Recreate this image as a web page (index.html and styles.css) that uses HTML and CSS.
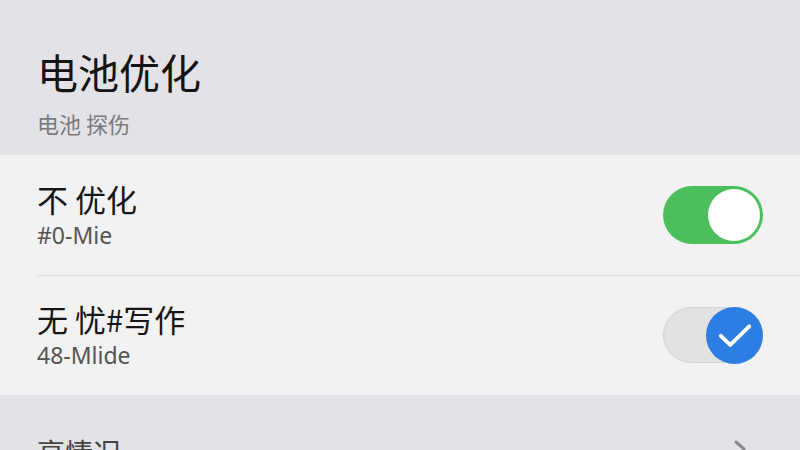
FILE: index.html
```html
<!DOCTYPE html>
<html lang="zh-CN">
<head>
<meta charset="utf-8">
<title>电池优化</title>
<link rel="stylesheet" href="styles.css">
</head>
<body>
  <header class="page-head">
    <h1 class="page-title">电池优化</h1>
    <p class="page-sub">电池 探伤</p>
  </header>

  <section class="card">
    <div class="row">
      <div class="row-text">
        <div class="row-title">不 优化</div>
        <div class="row-sub">#0-Mie</div>
      </div>
      <span class="switch switch-on"><span class="knob"></span></span>
    </div>
    <div class="row">
      <div class="row-text">
        <div class="row-title">无 忧#写作</div>
        <div class="row-sub">48-Mlide</div>
      </div>
      <span class="switch switch-check">
        <span class="knob knob-check">
          <svg viewBox="0 0 24 24" width="38" height="38"><path d="M3 12.5l6 5.8L21 6.5" fill="none" stroke="#fff" stroke-width="2.4" stroke-linecap="round" stroke-linejoin="round"/></svg>
        </span>
      </span>
    </div>
  </section>

  <section class="more">
    <span class="more-title">亮情况</span>
    <svg class="chevron" viewBox="0 0 20 20" width="20" height="20"><path d="M6 4l8 7" fill="none" stroke="#8a8a8e" stroke-width="3" stroke-linecap="round"/></svg>
  </section>
</body>
</html>
```
FILE: styles.css
```css
html, body {
  margin: 0;
  padding: 0;
}
body {
  width: 800px;
  height: 450px;
  overflow: hidden;
  background: #e3e2e7;
  font-family: "Noto Sans CJK SC", "Noto Sans", sans-serif;
  color: #141414;
}

.page-head {
  height: 155px;
  padding: 0 0 0 37px;
  box-sizing: border-box;
  display: flex;
  flex-direction: column;
}
.page-title {
  margin: 43px 0 0;
  font-size: 41px;
  font-weight: 400;
  line-height: 56px;
}
.page-sub {
  margin: 10px 0 0;
  font-size: 22px;
  line-height: 28px;
  color: #7a7a7c;
}

.card {
  background: #f2f2f2;
  height: 240px;
  padding-left: 37px;
  box-sizing: border-box;
  display: flex;
  flex-direction: column;
}
.row {
  flex: 1;
  display: flex;
  align-items: center;
  justify-content: space-between;
  padding-right: 37px;
}
.row + .row {
  border-top: 1px solid #dcdcdc;
}
.row-text {
  display: flex;
  flex-direction: column;
  gap: 4px;
}
.row-title {
  font-size: 31px;
  line-height: 36px;
  color: #161616;
}
.row-sub {
  font-family: "Noto Sans", "Noto Sans CJK SC", sans-serif;
  font-size: 23px;
  line-height: 28px;
  color: #555;
}

.switch {
  width: 100px;
  height: 58px;
  border-radius: 29px;
  display: flex;
  align-items: center;
  justify-content: flex-end;
  box-sizing: border-box;
}
.switch-on {
  background: #4cbf5d;
  padding: 3px;
}
.switch-on .knob {
  width: 52px;
  height: 52px;
  border-radius: 50%;
  background: #fff;
}
.switch-check {
  background: #e2e2e2;
  border: 1px solid #d4d4d4;
  height: 56px;
}
.knob-check {
  width: 57px;
  height: 57px;
  margin-right: -1px;
  border-radius: 50%;
  background: #2d7ee3;
  display: flex;
  align-items: center;
  justify-content: center;
}

.more {
  height: 55px;
  padding: 0 50px 0 37px;
  display: flex;
  justify-content: space-between;
  align-items: flex-end;
  overflow: hidden;
}
.more-title {
  font-size: 28px;
  line-height: 28px;
  margin-bottom: -16px;
  color: #444;
}
.chevron {
  margin-bottom: -8px;
}
```
